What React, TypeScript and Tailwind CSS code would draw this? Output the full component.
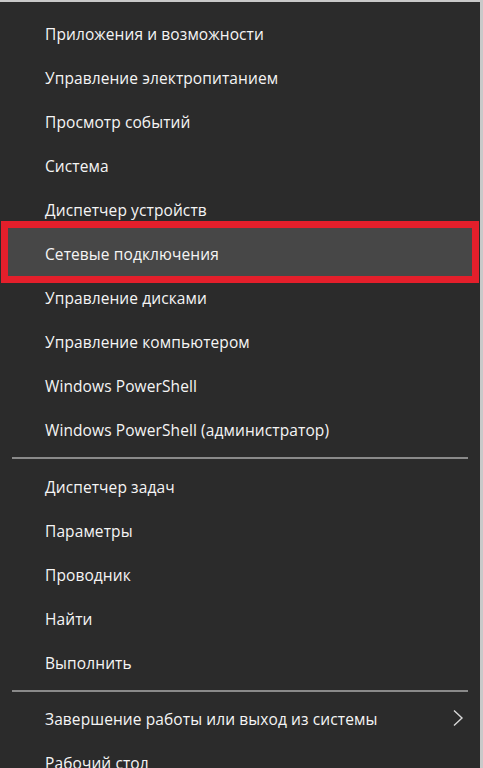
import React from "react";

const group1 = [
  "Приложения и возможности",
  "Управление электропитанием",
  "Просмотр событий",
  "Система",
  "Диспетчер устройств",
  "Сетевые подключения",
  "Управление дисками",
  "Управление компьютером",
  "Windows PowerShell",
  "Windows PowerShell (администратор)",
];

const group2 = ["Диспетчер задач", "Параметры", "Проводник", "Найти", "Выполнить"];

function Item({ label, selected, arrow }: { label: string; selected?: boolean; arrow?: boolean }) {
  return (
    <div className="relative h-[44px] flex items-center pl-[45px] pr-4">
      {selected && (
        <div className="absolute left-[1px] right-[1px] top-[-12px] bottom-[-6px] border-[7px] border-[#e41f2b] bg-[#474747]" />
      )}
      <span className="relative text-[15.5px] text-[#f5f5f5] tracking-[0.1px]">{label}</span>
      {arrow && (
        <svg
          className="absolute right-[16px] top-[11px]"
          width="12"
          height="18"
          viewBox="0 0 12 18"
          fill="none"
        >
          <path d="M2 1.5 L10 9 L2 16.5" stroke="#d8d8d8" strokeWidth="1.4" />
        </svg>
      )}
    </div>
  );
}

export default function App() {
  return (
    <div
      className="w-[483px] h-[768px] overflow-hidden bg-[#2b2b2b] border-t-2 border-r-[3px] border-[#c9c9c9] pt-[11px]"
      style={{ fontFamily: '"Open Sans", "Noto Sans", sans-serif' }}
    >
      {group1.map((l) => (
        <Item key={l} label={l} selected={l === "Сетевые подключения"} />
      ))}
      <div className="mx-[12px] mt-[4px] mb-[7px] h-[2px] bg-[#8a8a8a]" />
      {group2.map((l) => (
        <Item key={l} label={l} />
      ))}
      <div className="mx-[12px] mt-[4px] mb-[6px] h-[2px] bg-[#8a8a8a]" />
      <Item label="Завершение работы или выход из системы" arrow />
      <Item label="Рабочий стол" />
    </div>
  );
}
